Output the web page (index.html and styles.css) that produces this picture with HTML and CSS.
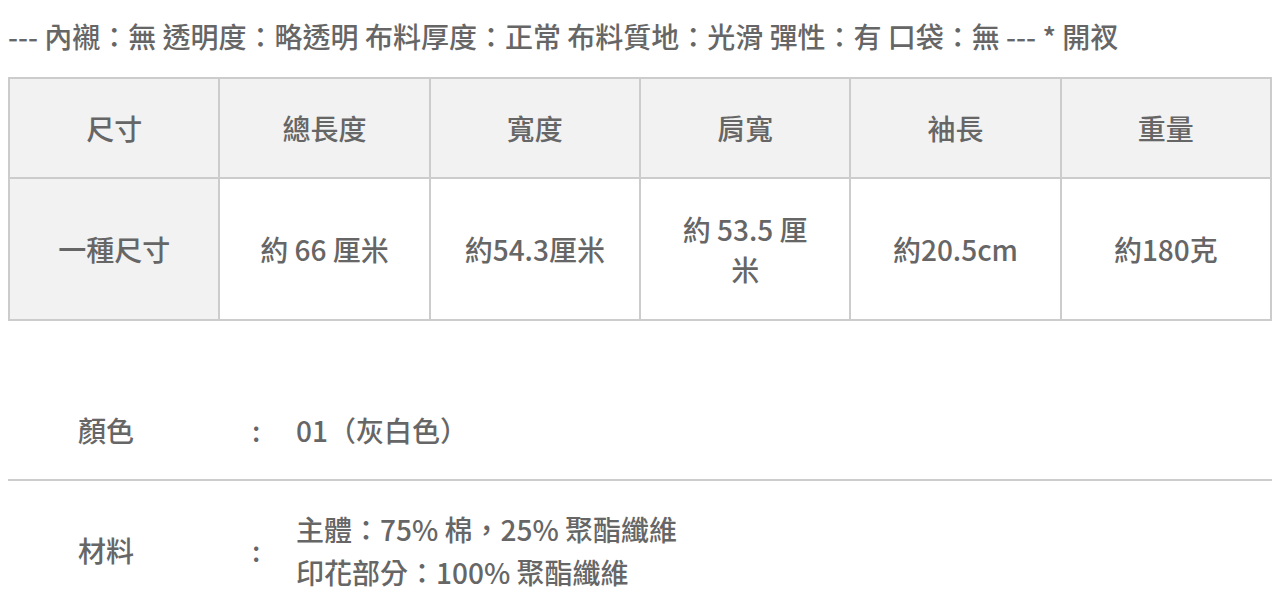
FILE: index.html
```html
<!DOCTYPE html>
<html lang="zh-Hant">
<head>
<meta charset="utf-8">
<title>商品規格</title>
<link rel="stylesheet" href="styles.css">
</head>
<body>
<div class="page">
  <p class="summary">--- 內襯：無 透明度：略透明 布料厚度：正常 布料質地：光滑 彈性：有 口袋：無 --- * 開衩</p>
  <table class="size-table">
    <thead>
      <tr>
        <th>尺寸</th>
        <th>總長度</th>
        <th>寬度</th>
        <th>肩寬</th>
        <th>袖長</th>
        <th>重量</th>
      </tr>
    </thead>
    <tbody>
      <tr>
        <th class="row-head">一種尺寸</th>
        <td>約 66 厘米</td>
        <td>約54.3厘米</td>
        <td>約 53.5 厘米</td>
        <td>約20.5cm</td>
        <td>約180克</td>
      </tr>
    </tbody>
  </table>
  <table class="spec-table">
    <tbody>
      <tr class="spec-row">
        <th class="spec-label">顏色</th>
        <td class="spec-colon">:</td>
        <td class="spec-value">01（灰白色）</td>
      </tr>
      <tr class="spec-row">
        <th class="spec-label">材料</th>
        <td class="spec-colon">:</td>
        <td class="spec-value multi">主體：75% 棉，25% 聚酯纖維<br>印花部分：100% 聚酯纖維</td>
      </tr>
    </tbody>
  </table>
</div>
</body>
</html>
```

FILE: styles.css
```css
html, body {
  margin: 0;
  padding: 0;
  background: #ffffff;
}

body {
  font-family: "Noto Sans CJK TC", "Noto Sans", sans-serif;
  font-size: 28px;
  font-weight: 500;
  color: #666666;
}

.page {
  padding: 16px 8px 0 8px;
}

.summary {
  margin: 0;
  line-height: 40px;
}

.size-table {
  margin-top: 21px;
  width: 100%;
  table-layout: fixed;
  border-collapse: collapse;
  border: 2px solid #cccccc;
}

.size-table th,
.size-table td {
  border: 2px solid #cccccc;
  padding: 29px 33px;
  line-height: 40px;
  text-align: center;
  vertical-align: middle;
  font-weight: 500;
  color: #666666;
}

.size-table thead th,
.size-table .row-head {
  background: #f2f2f2;
}

.size-table tbody td,
.size-table tbody th {
  padding-top: 30px;
  padding-bottom: 30px;
}

.spec-table {
  margin-top: 60px;
  width: 100%;
  border-collapse: collapse;
}

.spec-row + .spec-row {
  border-top: 2px solid #cccccc;
}

.spec-table th,
.spec-table td {
  padding: 29px 0;
  line-height: 40px;
  text-align: left;
  font-weight: 500;
  color: #666666;
  vertical-align: middle;
}

.spec-label {
  width: 170px;
  padding-left: 70px !important;
}

.spec-colon {
  width: 44px;
  padding-left: 4px !important;
}

.spec-value.multi {
  line-height: 43px;
  padding-top: 27px !important;
  padding-bottom: 25px !important;
}
```
